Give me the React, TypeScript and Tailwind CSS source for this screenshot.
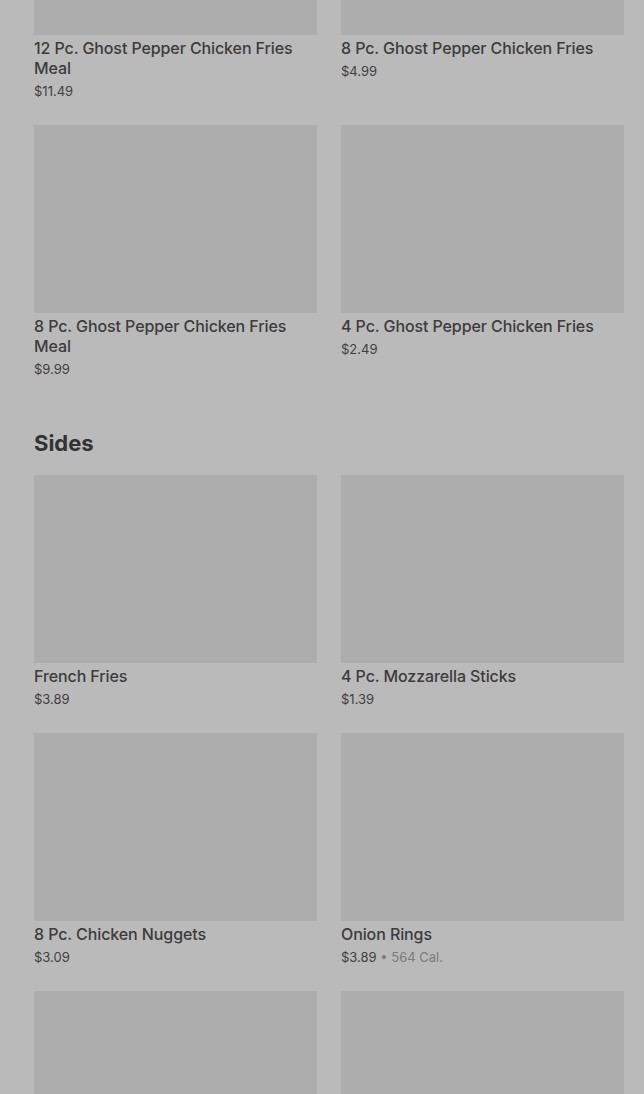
import React from "react";

interface MenuItem {
  name: string;
  price: string;
  cal?: string;
}

const topItems: MenuItem[] = [
  { name: "12 Pc. Ghost Pepper Chicken Fries Meal", price: "$11.49" },
  { name: "8 Pc. Ghost Pepper Chicken Fries", price: "$4.99" },
  { name: "8 Pc. Ghost Pepper Chicken Fries Meal", price: "$9.99" },
  { name: "4 Pc. Ghost Pepper Chicken Fries", price: "$2.49" },
];

const sides: MenuItem[] = [
  { name: "French Fries", price: "$3.89" },
  { name: "4 Pc. Mozzarella Sticks", price: "$1.39" },
  { name: "8 Pc. Chicken Nuggets", price: "$3.09" },
  { name: "Onion Rings", price: "$3.89", cal: "564 Cal." },
  { name: "", price: "" },
  { name: "", price: "" },
];

function ItemCard({ item }: { item: MenuItem }) {
  return (
    <div className="flex flex-col">
      <div className="h-[188px] w-full bg-[#adadad]" />
      {item.name && (
        <>
          <div className="mt-[3px] text-[16px] leading-5 font-medium tracking-[-0.1px] text-[#3c3c3c]">
            {item.name}
          </div>
          <div className="mt-[5px] text-[13px] leading-4 text-[#3f3f3f]">
            {item.price}
            {item.cal && (
              <span className="text-[#7c7c7c]"> • {item.cal}</span>
            )}
          </div>
        </>
      )}
    </div>
  );
}

export default function App() {
  return (
    <main
      className="min-h-screen h-[1094px] overflow-hidden bg-[#bababa] pl-[34px] pr-[20px]"
      style={{ fontFamily: "Inter, 'Liberation Sans', sans-serif" }}
    >
      <div className="-mt-[153px] grid grid-cols-2 gap-x-6 gap-y-[26px]">
        {topItems.map((item, i) => (
          <ItemCard key={i} item={item} />
        ))}
      </div>

      <h2 className="mt-[50px] text-[22px] leading-8 font-bold text-[#333333]">
        Sides
      </h2>

      <div className="mt-4 grid grid-cols-2 gap-x-6 gap-y-[26px]">
        {sides.map((item, i) => (
          <ItemCard key={i} item={item} />
        ))}
      </div>
    </main>
  );
}
